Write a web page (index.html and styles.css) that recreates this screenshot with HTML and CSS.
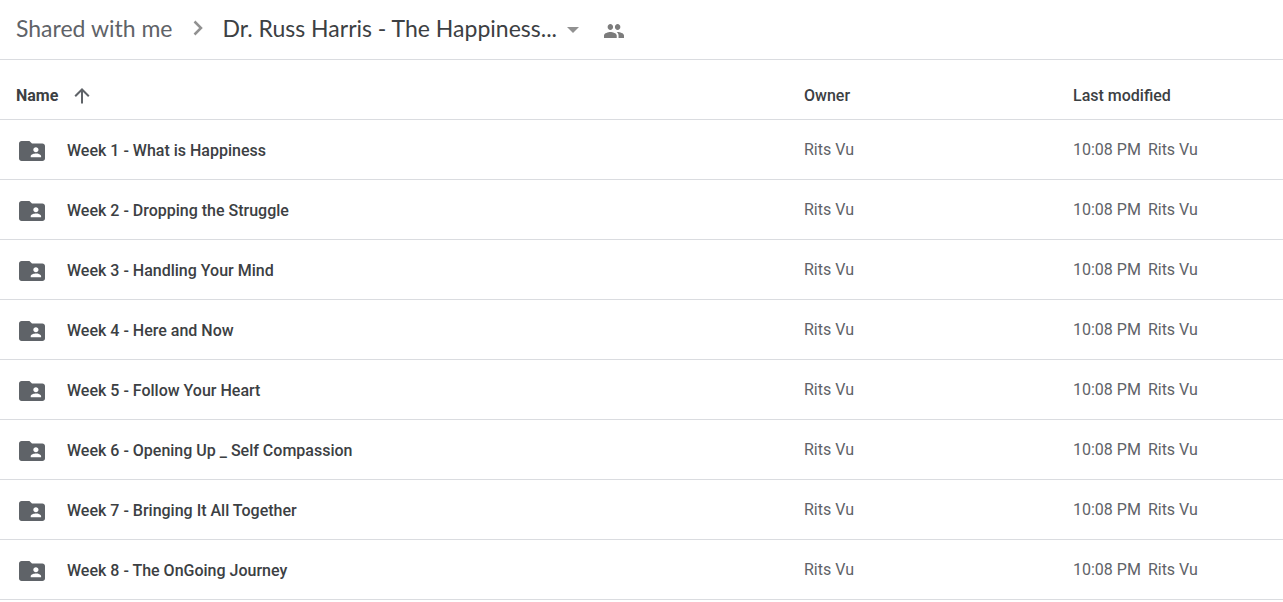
FILE: index.html
```html
<!DOCTYPE html>
<html lang="en">
<head>
<meta charset="utf-8">
<title>Dr. Russ Harris - The Happiness...</title>
<link rel="stylesheet" href="styles.css">
</head>
<body>
<svg width="0" height="0" class="sprite" aria-hidden="true">
  <symbol id="folder" viewBox="2 4 20 16" preserveAspectRatio="none"><path d="M20 6h-8l-2-2H4c-1.100 0-1.990.9-1.990 2L2 18c0 1.100.9 2 2 2h16c1.100 0 2-.9 2-2V8c0-1.100-.9-2-2-2zm-5 3c1.100 0 2 .9 2 2s-.9 2-2 2-2-.9-2-2 .9-2 2-2zm4 8h-8v-1c0-1.330 2.670-2 4-2s4 .67 4 2v1z"/></symbol>
</svg>
<header class="topbar">
  <nav class="crumbs" aria-label="Breadcrumb">
    <a class="crumb" href="#">Shared with me</a>
    <svg class="chevron" viewBox="0 0 10 16" aria-hidden="true"><path d="M1.500 1.500 8 8l-6.500 6.500"/></svg>
    <button class="current" type="button">Dr. Russ Harris - The Happiness...<svg class="caret" viewBox="0 0 12 6" aria-hidden="true"><path d="M0 0h12L6 6z"/></svg></button>
  </nav>
  <button class="people" type="button" aria-label="Manage people"><svg viewBox="1 5 22 14" preserveAspectRatio="none" aria-hidden="true"><path d="M16 11c1.660 0 2.990-1.340 2.990-3S17.660 5 16 5s-3 1.340-3 3 1.340 3 3 3zm-8 0c1.660 0 2.990-1.340 2.990-3S9.660 5 8 5 5 6.340 5 8s1.340 3 3 3zm0 2c-2.330 0-7 1.170-7 3.500V19h14v-2.500c0-2.330-4.670-3.500-7-3.500zm8 0c-.29 0-.62.02-.97.050 1.160.84 1.970 1.970 1.970 3.450V19h6v-2.500c0-2.330-4.670-3.500-7-3.500z"/></svg></button>
</header>
<main>
<table class="files">
  <colgroup><col><col class="col-owner"><col class="col-modified"></colgroup>
  <thead>
    <tr>
      <th scope="col" aria-sort="ascending"><button class="sort" type="button">Name<svg class="arrow" viewBox="0 0 16 16" aria-hidden="true"><path d="M8 15.500V1.500M1.200 8.300 8 1.500l6.800 6.800"/></svg></button></th>
      <th scope="col">Owner</th>
      <th scope="col">Last modified</th>
    </tr>
  </thead>
  <tbody>
    <tr><td><a class="file" href="#"><svg class="folder" aria-hidden="true"><use href="#folder"/></svg>Week 1 - What is Happiness</a></td><td>Rits Vu</td><td><time>10:08 PM</time><span class="by">Rits Vu</span></td></tr>
    <tr><td><a class="file" href="#"><svg class="folder" aria-hidden="true"><use href="#folder"/></svg>Week 2 - Dropping the Struggle</a></td><td>Rits Vu</td><td><time>10:08 PM</time><span class="by">Rits Vu</span></td></tr>
    <tr><td><a class="file" href="#"><svg class="folder" aria-hidden="true"><use href="#folder"/></svg>Week 3 - Handling Your Mind</a></td><td>Rits Vu</td><td><time>10:08 PM</time><span class="by">Rits Vu</span></td></tr>
    <tr><td><a class="file" href="#"><svg class="folder" aria-hidden="true"><use href="#folder"/></svg>Week 4 - Here and Now</a></td><td>Rits Vu</td><td><time>10:08 PM</time><span class="by">Rits Vu</span></td></tr>
    <tr><td><a class="file" href="#"><svg class="folder" aria-hidden="true"><use href="#folder"/></svg>Week 5 - Follow Your Heart</a></td><td>Rits Vu</td><td><time>10:08 PM</time><span class="by">Rits Vu</span></td></tr>
    <tr><td><a class="file" href="#"><svg class="folder" aria-hidden="true"><use href="#folder"/></svg>Week 6 - Opening Up _ Self Compassion</a></td><td>Rits Vu</td><td><time>10:08 PM</time><span class="by">Rits Vu</span></td></tr>
    <tr><td><a class="file" href="#"><svg class="folder" aria-hidden="true"><use href="#folder"/></svg>Week 7 - Bringing It All Together</a></td><td>Rits Vu</td><td><time>10:08 PM</time><span class="by">Rits Vu</span></td></tr>
    <tr><td><a class="file" href="#"><svg class="folder" aria-hidden="true"><use href="#folder"/></svg>Week 8 - The OnGoing Journey</a></td><td>Rits Vu</td><td><time>10:08 PM</time><span class="by">Rits Vu</span></td></tr>
  </tbody>
</table>
</main>
</body>
</html>
```
FILE: styles.css
```css
* { box-sizing: border-box; }
body {
  margin: 0;
  background: #fff;
  color: #3c4043;
  font: 16px/20px Roboto, sans-serif;
}
a { color: inherit; text-decoration: none; }
button {
  padding: 0;
  border: 0;
  background: none;
  color: inherit;
  font: inherit;
  cursor: pointer;
}
svg { display: block; flex: none; }
.sprite { position: absolute; }

.topbar {
  display: flex;
  align-items: center;
  gap: 25px;
  padding: 14px 16px 17px;
  border-bottom: 1px solid #dadce0;
}
.crumbs {
  display: flex;
  align-items: center;
  font: 23px/28px Lato, sans-serif;
}
.crumb { color: #5f6368; }
.chevron {
  width: 10px;
  height: 16px;
  margin: 0 20px;
  fill: none;
  stroke: #919191;
  stroke-width: 2.500;
}
.current { display: flex; align-items: center; gap: 10px; }
.caret { width: 12px; height: 6px; margin-top: 4px; fill: #919191; }
.people { padding-top: 6px; }
.people svg { width: 20px; height: 14px; fill: #7c7c7c; }

.files {
  width: 100%;
  border-spacing: 0;
  table-layout: fixed;
}
.col-owner { width: 269px; }
.col-modified { width: 210px; }
.files th, .files td {
  height: 60px;
  padding: 0;
  border-bottom: 1px solid #dadce0;
  text-align: left;
  vertical-align: middle;
  white-space: nowrap;
}
.files th { padding-top: 12px; font-weight: 500; }
.files td { color: #5f6368; }
.files th:first-child { padding-left: 16px; }
.files td:first-child { padding: 2px 0 0 19px; }
.sort { display: flex; align-items: center; gap: 16px; font-weight: 700; }
.arrow { width: 16px; height: 16px; fill: none; stroke: #5f6368; stroke-width: 2; }
.file {
  display: flex;
  align-items: center;
  gap: 22px;
  color: #3c4043;
  font-weight: 500;
}
.folder { width: 26px; height: 20px; fill: #5f6368; }
.by { margin-left: 7px; }
```
